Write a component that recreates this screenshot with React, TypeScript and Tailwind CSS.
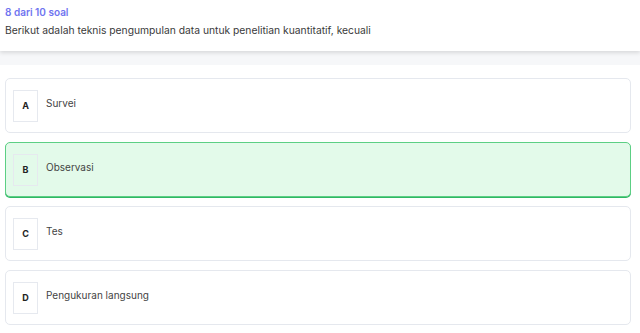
import React from 'react';

const options = [
  { key: 'A', label: 'Survei' },
  { key: 'B', label: 'Observasi', selected: true },
  { key: 'C', label: 'Tes' },
  { key: 'D', label: 'Pengukuran langsung' },
];

export default function App() {
  return (
    <div className="min-h-[333px] w-[640px] bg-white font-['Inter',sans-serif] text-[#333]">
      <div className="relative z-10 h-[51px] bg-white px-[5px] pt-[5px] shadow-[0_2px_4px_rgba(0,0,0,0.12)]">
        <div className="text-[10px] font-semibold leading-[14px] text-[#6f74f0]">8 dari 10 soal</div>
        <div className="mt-[4px] text-[10.3px] leading-[14px] text-[#3a3a3a]">
          Berikut adalah teknis pengumpulan data untuk penelitian kuantitatif, kecuali
        </div>
      </div>
      <div className="h-[14px] bg-[#f6f7f9]" />
      <div className="flex flex-col gap-[9px] px-[5px] pt-[13px] pb-2">
        {options.map((o) => (
          <div
            key={o.key}
            className={
              o.selected
                ? 'flex h-[55px] w-[626px] items-center rounded-[5px] border border-[#5ccf84] bg-[#e3faea] pl-[7px] shadow-[0_1px_0_#2fb765]'
                : 'flex h-[55px] w-[626px] items-center rounded-[5px] border border-[#e5e8ee] bg-white pl-[7px]'
            }
          >
            <div className="flex h-[32px] w-[25px] items-center justify-center border border-[#e6e9ef] text-[9px] font-bold text-[#222]">
              {o.key}
            </div>
            <div className="ml-[8px] -mt-[4px] text-[10px] text-[#444]">{o.label}</div>
          </div>
        ))}
      </div>
    </div>
  );
}
